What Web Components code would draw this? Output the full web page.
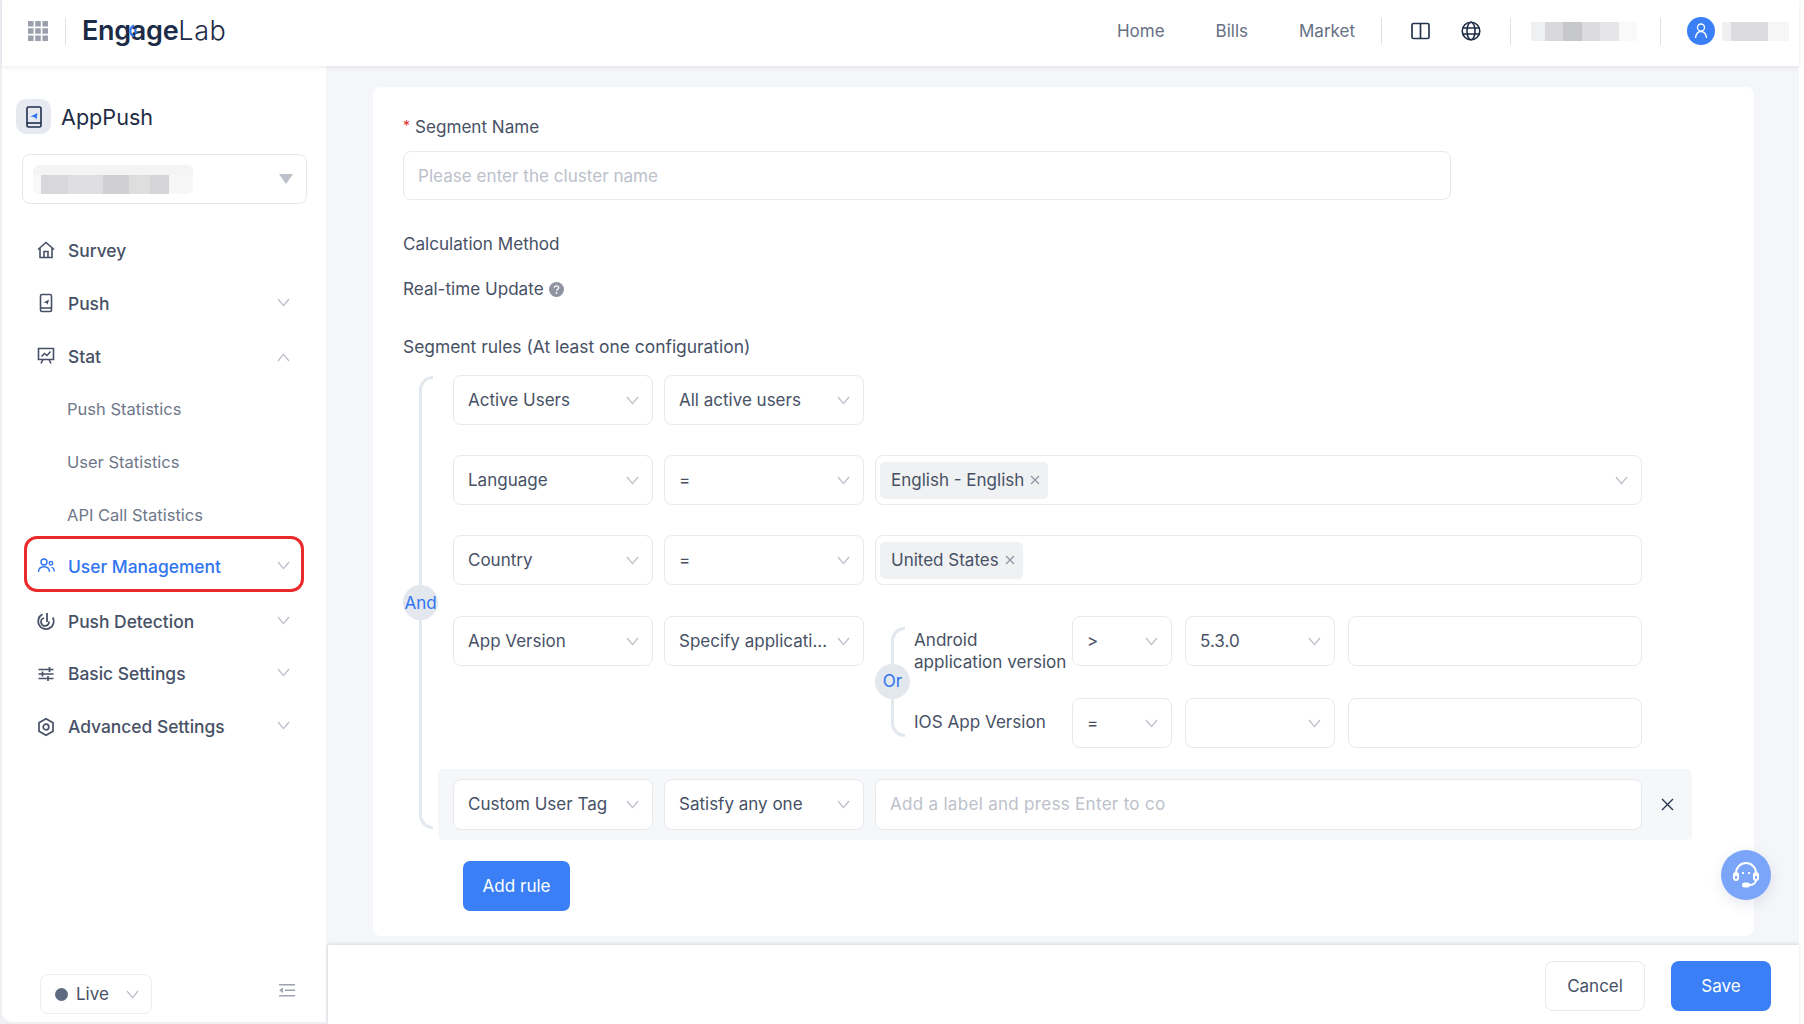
<!DOCTYPE html>
<html>
<head>
<meta charset="utf-8">
<title>EngageLab AppPush</title>
<style>
  html, body { margin: 0; height: 100%; }
  body { background: #ffffff; overflow: hidden; font-family: Inter, "Liberation Sans", sans-serif; }
  #app { width: 1799px; height: 1024px; display: flex; flex-direction: column; background: #eef0f4; padding-left: 2px; box-sizing: border-box; }
  #body { flex: 1; display: flex; min-height: 0; }
  #right { flex: 1; display: flex; flex-direction: column; min-width: 0; }
  svg { display: block; }
</style>
</head>
<body>
<div id="app">
  <top-bar></top-bar>
  <div id="body">
    <side-bar></side-bar>
    <div id="right">
      <segment-form></segment-form>
      <foot-bar></foot-bar>
    </div>
  </div>
</div>

<script>
  const chevron = '<svg width="13" height="9" viewBox="0 0 13 9"><path d="M1 1l5.5 6.6L12 1" fill="none" stroke="#b8bcc6" stroke-width="1.2"/></svg>';

  const icons = {
    home: '<path d="M2 9.5L10 2.5l8 7M4 8v9.5h12V8M8 17.5v-6h4v6" fill="none" stroke="currentColor" stroke-width="1.6"/>',
    push: '<rect x="4.500" y="1.500" width="11" height="17" rx="1.500" fill="none" stroke="currentColor" stroke-width="1.6"/><path d="M4.500 15h11" stroke="currentColor" stroke-width="1.6"/><path d="M7.500 9.500l5.500-3-1.300 5.300-1.300-1.800z" fill="currentColor"/>',
    stat: '<path d="M2.500 2.500h15v11h-15zM7 13.500l-2 4M13 13.500l2 4" fill="none" stroke="currentColor" stroke-width="1.6"/><path d="M5.500 10.500l3-3 2.500 2 3.500-4" fill="none" stroke="currentColor" stroke-width="1.5"/>',
    users: '<circle cx="8" cy="6" r="3" fill="none" stroke="currentColor" stroke-width="1.400"/><path d="M2.500 16c0-3.500 2-5.300 5.500-5.300s5.500 1.800 5.500 5.300" fill="none" stroke="currentColor" stroke-width="1.400"/><circle cx="15" cy="7.300" r="1.800" fill="none" stroke="currentColor" stroke-width="1.300"/><path d="M15.500 11.300c2 .3 2.800 2 2.800 4.200" fill="none" stroke="currentColor" stroke-width="1.300"/>',
    radar: '<path d="M6.500 3.300A7.800 7.800 0 1 0 16.800 6.500" fill="none" stroke="currentColor" stroke-width="1.800"/><path d="M8 7a4 4 0 1 0 5 3.500" fill="none" stroke="currentColor" stroke-width="1.800"/><path d="M11 2v9" stroke="currentColor" stroke-width="1.800"/>',
    sliders: '<path d="M2.500 5.500h15M2.500 10h15M2.500 14.500h15" stroke="currentColor" stroke-width="1.700"/><path d="M13.500 3v5M6.500 7.500v5M12 12v5" stroke="currentColor" stroke-width="1.700"/>',
    hex: '<path d="M10 1.800l7 4v8.400l-7 4-7-4V5.800z" fill="none" stroke="currentColor" stroke-width="1.700"/><circle cx="10" cy="10" r="2.800" fill="none" stroke="currentColor" stroke-width="1.700"/>'
  };

  class TopBar extends HTMLElement {
    constructor() {
      super();
      this.attachShadow({mode: 'open'}).innerHTML = `
        <style>
          :host { display: flex; align-items: center; height: 66px; box-sizing: border-box; padding: 0 10px 4px 26px; background: #fff; box-shadow: 0 1px 5px rgba(60,70,90,.12); position: relative; z-index: 2; color: #667085; font-size: 17px; flex: none; }
          .sep { width: 1px; height: 27px; background: #dde0e7; flex: none; }
          .logo { margin-left: 16px; font-size: 27px; color: #1c2b46; font-weight: 600; letter-spacing: -.3px; position: relative; line-height: 40px; }
          .logo b { font-weight: 300; letter-spacing: .6px; }
          .arc { position: absolute; left: 44px; top: 12px; }
          .grow { flex: 1; }
          nav { display: flex; gap: 51px; }
          .patch { height: 19px; }
          .p1 { width: 106px; margin: 0 23px 0 20px; background: linear-gradient(90deg,#eff0f2 13%,#d9d9dc 13% 30%,#c7c8cc 30% 48%,#dcdcdf 48% 65%,#e6e6e8 65% 83%,#f9f9fa 83%); }
          .p2 { width: 67px; margin-left: 7px; background: linear-gradient(90deg,#f0f0f2 14%,#dcdcdf 14% 68%,#f6f6f7 68%); }
          .avatar { width: 28px; height: 28px; border-radius: 50%; background: #3a7ff6; margin-left: 26px; display: flex; align-items: center; justify-content: center; flex: none; }
        </style>
        <svg width="20" height="20" viewBox="0 0 18 18" fill="#9ba0ac"><path d="M0 0h5v5H0zM6.500 0h5v5h-5zM13 0h5v5h-5zM0 6.500h5v5H0zM6.500 6.500h5v5h-5zM13 6.500h5v5h-5zM0 13h5v5H0zM6.500 13h5v5h-5zM13 13h5v5h-5z"/></svg>
        <span class="sep" style="margin-left:17px"></span>
        <span class="logo">Engage<b>Lab</b><svg class="arc" width="14" height="16" viewBox="0 0 14 16"><path d="M8 2.500A6 6 0 0 0 8 13.500M10.500 5.500a3 3 0 0 0 0 5" fill="none" stroke="#2f74f0" stroke-width="2"/></svg></span>
        <span class="grow"></span>
        <nav><span>Home</span><span>Bills</span><span>Market</span></nav>
        <span class="sep" style="margin:0 29px 0 26px"></span>
        <svg width="19" height="18" viewBox="0 0 19 18"><rect x="1" y="1.500" width="17" height="15" rx="1.500" fill="none" stroke="#26354f" stroke-width="1.700"/><path d="M9.500 1.500v15" stroke="#26354f" stroke-width="1.700"/></svg>
        <svg style="margin:0 29px 0 31px" width="20" height="20" viewBox="0 0 20 20" fill="none" stroke="#1c2b46" stroke-width="1.600"><circle cx="10" cy="10" r="8.800"/><ellipse cx="10" cy="10" rx="4" ry="8.800"/><path d="M1.500 7h17M1.500 13h17"/></svg>
        <span class="sep"></span>
        <div class="patch p1"></div>
        <span class="sep"></span>
        <span class="avatar"><svg width="16" height="18" viewBox="0 0 16 18" fill="none" stroke="#fff" stroke-width="1.300"><circle cx="8" cy="5.500" r="3.500"/><path d="M2.500 16c.5-4 2.500-6.500 5.500-6.500s5 2.500 5.500 6.500"/></svg></span>
        <div class="patch p2"></div>`;
    }
  }

  class NavItem extends HTMLElement {
    constructor() {
      super();
      const icon = icons[this.getAttribute('icon')];
      const arrow = this.getAttribute('arrow');
      this.attachShadow({mode: 'open'}).innerHTML = `
        <style>
          :host { display: flow-root; height: 52.95px; color: #475166; font-size: 17.4px; font-weight: 500; }
          .row { display: flex; align-items: center; height: 100%; box-sizing: border-box; border: 3px solid transparent; border-radius: 13px; padding: 0 11px 0 9px; }
          .ic { width: 20px; height: 20px; margin-right: 12px; flex: none; }
          .txt { flex: 1; white-space: nowrap; }
          .ch { margin-bottom: 6px; }
          :host([sub]) { color: #6f7889; font-weight: 400; font-size: 16.5px; }
          :host([sub]) .row { padding-left: 40px; }
          :host([marked]) { color: #2f74f0; }
          :host([marked]) .row { border-color: #ea2a2a; height: 56px; margin-top: -6px; padding-top: 5px; }
          :host([arrow="up"]) .ch { transform: rotate(180deg); margin: 6px 0 0; }
        </style>
        <div class="row">
          ${icon ? `<svg class="ic" viewBox="0 0 20 20">${icon}</svg>` : ''}
          <span class="txt"><slot></slot></span>
          ${arrow ? `<span class="ch">${chevron}</span>` : ''}
        </div>`;
    }
  }

  class SideBar extends HTMLElement {
    constructor() {
      super();
      this.attachShadow({mode: 'open'}).innerHTML = `
        <style>
          :host { display: flex; flex-direction: column; width: 324px; height: calc(100% - 2px); background: #fff; border-bottom-left-radius: 10px; box-sizing: border-box; flex: none; }
          .app { display: flex; align-items: center; margin: 33px 0 0 14px; font-size: 21.6px; color: #1f2c45; }
          .mark { width: 35px; height: 35px; border-radius: 10px; background: #e6eaf0; margin-right: 10px; display: flex; align-items: center; justify-content: center; }
          .pick { margin: 20px 0 0 20px; width: 285px; height: 50px; border: 1px solid #e5e7ec; border-radius: 8px; box-sizing: border-box; display: flex; align-items: center; padding: 0 13px 0 10px; justify-content: space-between; }
          .blur { width: 160px; height: 29px; background: linear-gradient(180deg,#f4f4f5 0 34%,transparent 34%), linear-gradient(90deg,#f8f8f9 5%,#d8d8da 5% 22%,#dfdfe1 22% 44%,#d0d0d3 44% 60%,#dededf 60% 73%,#d5d5d8 73% 85%,#f7f7f8 85%); border-radius: 6px; }
          .tri { width: 0; height: 0; border: 7px solid transparent; border-top: 10px solid #bcc0c9; border-bottom: 0; }
          nav { margin: 20px 0 0 22px; width: 280px; }
          .bottom { margin: auto 0 8px 38px; display: flex; align-items: center; }
          .live { width: 112px; height: 40px; border: 1px solid #eceef2; border-radius: 8px; box-sizing: border-box; display: flex; align-items: center; padding-left: 14px; font-size: 17px; color: #475166; }
          .dot { width: 13px; height: 13px; border-radius: 50%; background: #5d6b80; margin-right: 8px; }
          .live svg { margin-left: 17px; }
          .fold { margin: 0 0 7px 127px; }
        </style>
        <div class="app">
          <span class="mark"><svg width="16" height="22" viewBox="0 0 16 22"><rect x="1" y="1" width="14" height="20" rx="1.500" fill="none" stroke="#1f2f4d" stroke-width="1.600"/><path d="M1 17h14" stroke="#1f2f4d" stroke-width="1.600"/><path d="M4.500 10.500l7-3.500-1 6.500-2-2.200z" fill="#2f74f0"/></svg></span>
          AppPush
        </div>
        <div class="pick"><div class="blur"></div><span class="tri"></span></div>
        <nav>
          <nav-item icon="home">Survey</nav-item>
          <nav-item icon="push" arrow="down">Push</nav-item>
          <nav-item icon="stat" arrow="up">Stat</nav-item>
          <nav-item sub>Push Statistics</nav-item>
          <nav-item sub>User Statistics</nav-item>
          <nav-item sub>API Call Statistics</nav-item>
          <nav-item icon="users" arrow="down" marked>User Management</nav-item>
          <nav-item icon="radar" arrow="down">Push Detection</nav-item>
          <nav-item icon="sliders" arrow="down">Basic Settings</nav-item>
          <nav-item icon="hex" arrow="down">Advanced Settings</nav-item>
        </nav>
        <div class="bottom">
          <div class="live"><span class="dot"></span>Live${chevron}</div>
          <svg class="fold" width="16" height="13" viewBox="0 0 16 13" fill="#9ea3af"><path d="M0 0h16v1.500H0zM0 11h16v1.500H0zM6 5.500h10V7H6zM4 3.500v5.500L0 6.300z"/></svg>
        </div>`;
    }
  }

  class RuleSelect extends HTMLElement {
    constructor() {
      super();
      this.attachShadow({mode: 'open'}).innerHTML = `
        <style>
          :host { display: flex; align-items: center; justify-content: space-between; box-sizing: border-box; height: 50px; width: 200px; flex: none; border: 1px solid #e7e9ee; border-radius: 8px; background: #fff; padding: 0 13px 0 14px; color: #475166; font-size: 17px; white-space: nowrap; }
          .v { overflow: hidden; }
          svg { flex: none; margin-top: 1px; }
          :host([wide]) { width: 767px; padding-left: 4px; }
          :host([plain]) { justify-content: flex-start; }
          :host([ph]) { color: #bcc1cb; padding-left: 14px; letter-spacing: .3px; }
        </style>
        <span class="v"><slot></slot></span>
        ${this.hasAttribute('plain') ? '' : chevron}`;
    }
  }

  class TagChip extends HTMLElement {
    constructor() {
      super();
      this.attachShadow({mode: 'open'}).innerHTML = `
        <style>
          :host { display: inline-flex; align-items: center; height: 37px; padding: 0 8px 0 11px; background: #f0f1f3; border-radius: 5px; color: #475166; font-size: 17px; }
          svg { margin-left: 6px; }
        </style>
        <slot></slot>
        <svg width="10" height="10" viewBox="0 0 10 10"><path d="M1 1l8 8M9 1l-8 8" stroke="#8b92a0" stroke-width="1.100"/></svg>`;
    }
  }

  class LogicGroup extends HTMLElement {
    constructor() {
      super();
      this.attachShadow({mode: 'open'}).innerHTML = `
        <style>
          :host { display: block; position: relative; }
          .line { position: absolute; left: var(--line-x); top: var(--line-top, 0); bottom: var(--line-bottom, 0); width: 14px; border: solid #e3e7ee; border-width: 3px 0 3px 3px; border-radius: 14px 0 0 14px; box-sizing: border-box; }
          .badge { position: absolute; left: calc(var(--line-x) - 16px); top: var(--badge-y); width: 35px; height: 35px; border-radius: 50%; background: #e3e7ee; color: #2f74f0; font-size: 17px; display: flex; align-items: center; justify-content: center; }
        </style>
        <span class="line"></span>
        <span class="badge">${this.getAttribute('label')}</span>
        <slot></slot>`;
    }
  }

  class SegmentForm extends HTMLElement {
    constructor() {
      super();
      this.attachShadow({mode: 'open'}).innerHTML = `
        <style>
          :host { display: block; flex: 1; background: #f5f6f9; padding: 21px 45px 9px 47px; min-height: 0; color: #475166; font-size: 17.1px; }
          .card { height: 100%; box-sizing: border-box; background: #fff; border-radius: 8px; padding: 0 62px 0 30px; position: relative; }
          .lab { line-height: 20px; }
          .req { color: #ea2a2a; margin-right: 5px; font-size: 14px; vertical-align: 2px; }
          .name { width: 1048px; height: 49px; margin-top: 14px; border: 1px solid #e7e9ee; border-radius: 8px; box-sizing: border-box; display: flex; align-items: center; padding-left: 14px; color: #bcc1cb; }
          .help { display: inline-block; vertical-align: -2px; margin-left: 5px; }
          .rules { margin-top: 18px; --line-x: 16px; --line-top: 1px; --line-bottom: 11px; --badge-y: 210px; }
          .list { display: flex; flex-direction: column; gap: 30.2px; padding-left: 50px; }
          .row { display: flex; gap: 11px; }
          .or { --line-x: 16px; --line-top: 11px; --line-bottom: 11px; --badge-y: 48px; width: 767px; }
          .or-list { display: flex; flex-direction: column; gap: 32.5px; padding-left: 39px; }
          .or-row { display: flex; gap: 13px; height: 50px; }
          .or-lab { width: 158px; margin-right: -13px; line-height: 22px; padding-top: 13px; flex: none; white-space: nowrap; }
          .or-lab.one { line-height: 48px; padding-top: 0; }
          .mid { width: 100px; }
          .val { width: 150px; }
          .free { width: 294px; }
          .custom { display: flex; gap: 11px; align-items: center; height: 71px; margin: -9.5px 0 0 -15px; padding-left: 15px; box-sizing: border-box; width: 1254px; background: #f6f7f9; border-radius: 5px; }
          .x { margin-left: 8px; }
          .custom rule-select { height: 51px; }
          .add { width: 107px; height: 50px; margin: 21px 0 0 60px; border-radius: 7px; background: #3a7ff6; color: #fff; display: flex; align-items: center; justify-content: center; }
          .fab { position: absolute; right: -17px; top: 763px; width: 50px; height: 50px; border-radius: 50%; background: #7ba5f8; box-shadow: 0 4px 14px rgba(70,90,140,.14); display: flex; align-items: center; justify-content: center; }
        </style>
        <div class="card">
          <div class="lab" style="padding-top:29px"><span class="req">*</span>Segment Name</div>
          <div class="name">Please enter the cluster name</div>
          <div class="lab" style="margin-top:34px">Calculation Method</div>
          <div class="lab" style="margin-top:25px">Real-time Update<svg class="help" width="15" height="15" viewBox="0 0 15 15"><circle cx="7.500" cy="7.500" r="7.500" fill="#8f94a0"/><path d="M5.300 5.800c.1-1.300 1-2 2.200-2s2.200.7 2.200 1.900c0 1.600-2.100 1.600-2.100 3.100" fill="none" stroke="#fff" stroke-width="1.300"/><circle cx="7.500" cy="11" r=".9" fill="#fff"/></svg></div>
          <div class="lab" style="margin-top:38px;font-size:17.4px">Segment rules (At least one configuration)</div>
          <logic-group class="rules" label="And">
            <div class="list">
              <div class="row"><rule-select>Active Users</rule-select><rule-select>All active users</rule-select></div>
              <div class="row"><rule-select>Language</rule-select><rule-select>=</rule-select>
                <rule-select wide><tag-chip>English - English</tag-chip></rule-select></div>
              <div class="row"><rule-select>Country</rule-select><rule-select>=</rule-select>
                <rule-select wide plain><tag-chip>United States</tag-chip></rule-select></div>
              <div class="row"><rule-select>App Version</rule-select><rule-select>Specify applicati...</rule-select>
                <logic-group class="or" label="Or">
                  <div class="or-list">
                    <div class="or-row"><span class="or-lab">Android<br>application version</span><rule-select class="mid">&gt;</rule-select><rule-select class="val">5.3.0</rule-select><rule-select class="free" plain></rule-select></div>
                    <div class="or-row"><span class="or-lab one">IOS App Version</span><rule-select class="mid">=</rule-select><rule-select class="val"></rule-select><rule-select class="free" plain></rule-select></div>
                  </div>
                </logic-group>
              </div>
              <div class="custom"><rule-select>Custom User Tag</rule-select><rule-select>Satisfy any one</rule-select>
                <rule-select wide plain ph>Add a label and press Enter to co</rule-select>
                <svg class="x" width="13" height="13" viewBox="0 0 13 13"><path d="M1 1l11 11M12 1L1 12" stroke="#26354f" stroke-width="1.400"/></svg></div>
            </div>
          </logic-group>
          <div class="add">Add rule</div>
          <div class="fab"><svg width="32" height="32" viewBox="0 0 32 32" fill="none" stroke="#fff" stroke-width="2"><path d="M6 17v-3a10 10 0 0 1 20 0v3"/><rect x="4" y="14" width="4" height="7" rx="2"/><rect x="24" y="14" width="4" height="7" rx="2"/><path d="M26 21c0 3-3 5-7 5"/><rect x="13" y="24.500" width="6" height="3" rx="1.500" fill="#fff"/><path d="M13 13v2M19 13v2"/></svg></div>
        </div>`;
    }
  }

  class FootBar extends HTMLElement {
    constructor() {
      super();
      this.attachShadow({mode: 'open'}).innerHTML = `
        <style>
          :host { display: flex; justify-content: flex-end; align-items: center; gap: 26px; height: 79px; box-sizing: border-box; padding: 2px 28px 0 0; flex: none; background: #fff; margin-left: 2px; box-shadow: 0 -1px 4px rgba(60,70,90,.16); position: relative; font-size: 17px; }
          span { width: 100px; height: 50px; box-sizing: border-box; border-radius: 8px; display: flex; align-items: center; justify-content: center; }
          .c { border: 1px solid #e7e9ee; color: #475166; }
          .s { background: #3a7ff6; color: #fff; }
        </style>
        <span class="c">Cancel</span><span class="s">Save</span>`;
    }
  }

  customElements.define('top-bar', TopBar);
  customElements.define('nav-item', NavItem);
  customElements.define('side-bar', SideBar);
  customElements.define('rule-select', RuleSelect);
  customElements.define('tag-chip', TagChip);
  customElements.define('logic-group', LogicGroup);
  customElements.define('segment-form', SegmentForm);
  customElements.define('foot-bar', FootBar);
</script>
</body>
</html>
